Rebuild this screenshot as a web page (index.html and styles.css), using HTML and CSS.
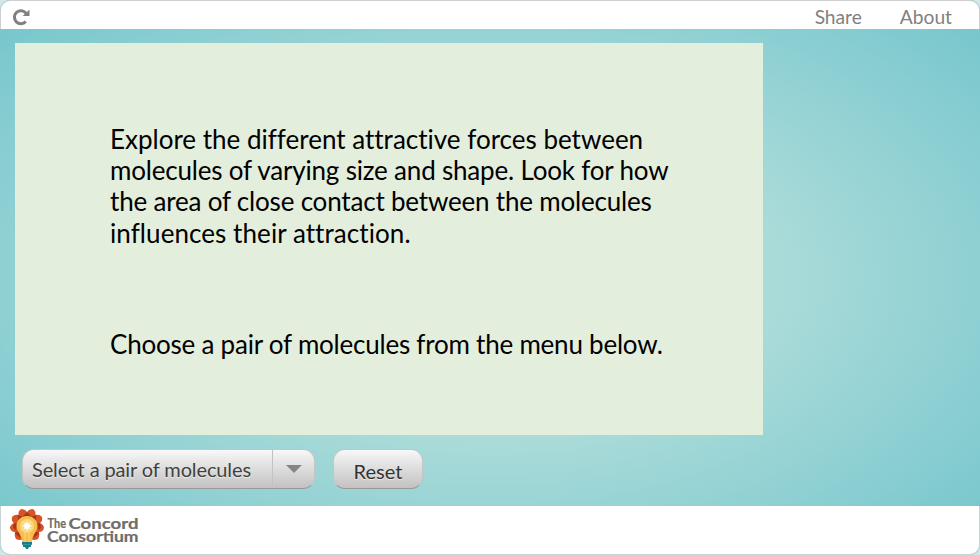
FILE: index.html
```html
<!DOCTYPE html>
<html lang="en">
<head>
<meta charset="utf-8">
<title>Molecule attraction</title>
<link rel="stylesheet" href="styles.css">
</head>
<body>
<div class="app">
  <header class="topbar">
    <svg class="reload" width="18" height="18" viewBox="0 0 18 18" aria-label="Reload">
      <path d="M14 5.200A6.500 6.500 0 1 0 13.800 13.500" fill="none" stroke="#808080" stroke-width="3"/>
      <path d="M17.500 1.500v6.500h-6.800z" fill="#808080"/>
    </svg>
    <nav class="links"><a>Share</a><a>About</a></nav>
  </header>
  <main class="stage">
    <section class="panel">
      <p><span class="wide">Explore the different attractive forces between</span><br>molecules of varying size and shape. Look for how<br>the area of close contact between the molecules<br><span class="wider">influences their attraction.</span></p>
      <p class="prompt">Choose a pair of molecules from the menu below.</p>
    </section>
    <div class="controls">
      <div class="control select"><span class="label">Select a pair of molecules</span><span class="toggle"><i class="arrow"></i></span></div>
      <button class="control reset">Reset</button>
    </div>
  </main>
  <footer class="footer">
    <svg class="logo" width="132" height="42" viewBox="0 0 132 42" aria-label="The Concord Consortium">
      <path d="M18 4Q20 1 24 1q3 2 2.500 6 4-1 6.500 2 1 4-2 6 4 2 4 5-1 4-5 4 1 4-1 7-4 2-7 0H14q-3 2-7 0-2-3-1-7-4 0-5-4 0-3 4-5-3-2-2-6 2.500-3 6.500-2Q9 3 12 1q4 0 6 3z" fill="#d75426"/>
      <path d="M18 4l4 4-4 5-4-5zM8.500 7l6 2-5 5zM27.500 7l-6 2 5 5zM5 15l6 1-5 6-2-3zM31 15l-6 1 5 6 2-3zM5.500 25l6-2v7zM30.500 25l-6-2v7z" fill="#a8361d"/>
      <path d="M18 8C11.800 8 7.500 12.400 7.500 18c0 5.500 5 8 5.800 16h9.400c.8-8 5.800-10.500 5.800-16C28.500 12.400 24.200 8 18 8z" fill="#f8bd4d"/>
      <circle cx="18" cy="18" r="7" fill="#fbd77d"/>
      <path d="M18 12.500l1 3.200 2.800-1.500-1.500 2.800 3.200 1-3.200 1 1.500 2.800-2.800-1.500-1 3.200-1-3.200-2.800 1.500 1.500-2.800-3.200-1 3.200-1-1.500-2.800 2.800 1.500z" fill="#fff"/>
      <path d="M16 24v10M20 24v10" stroke="#fbd77d"/>
      <path d="M13 34h10v3h-1v2h-2l-1 2h-2l-1-2h-2v-2h-1z" fill="#15808b"/>
      <path d="M13 36.500h10" stroke="#4ba3a7" stroke-width=".6"/>
      <g class="wordmark">
        <text class="the" x="38.500" y="19.500" textLength="18.500" lengthAdjust="spacingAndGlyphs">The</text>
        <text x="59.500" y="21.200" textLength="70" lengthAdjust="spacingAndGlyphs">Concord</text>
        <text x="38" y="33.700" textLength="91.500" lengthAdjust="spacingAndGlyphs">Consortium</text>
      </g>
    </svg>
  </footer>
</div>
</body>
</html>
```
FILE: styles.css
```css
* { box-sizing: border-box; }
body { margin: 0; background: #d4e7e8; font-family: Lato, sans-serif; font-variant-ligatures: none; }
.app {
  height: 555px;
  display: flex;
  flex-direction: column;
  overflow: hidden;
  border-radius: 10px;
  background: radial-gradient(ellipse farthest-corner at center, #d2ebdf 0%, #acdcd9 39%, #8fd0d3 70%, #72c5cb 100%);
}
.topbar {
  height: 29px;
  flex: none;
  display: flex;
  justify-content: space-between;
  padding: 7px 27px 0 11px;
  background: #fff;
  border: 1px solid #cfcfcf;
  border-bottom: 0;
  border-radius: 10px 10px 0 0;
}
.links { display: flex; gap: 38px; color: #808080; font-size: 19.200px; line-height: 18px; }
.stage { height: 477px; flex: none; padding: 14px 15px 0; }
.panel { width: 748px; height: 392px; padding: 81px 0 0 95px; background: #e4eedd; color: #000; font-size: 26px; line-height: 31.200px; letter-spacing: -.19px; }
.panel p { margin: 0; }
.panel .prompt { margin-top: 80px; letter-spacing: -.22px; }
.wide { letter-spacing: 0; }
.wider { letter-spacing: .07px; }
.controls { display: flex; gap: 18px; padding: 14px 7px 0; }
.control {
  height: 40px;
  border: 1px solid #c5c5c5;
  border-bottom-color: #999;
  border-radius: 12px;
  background: linear-gradient(#f8f8f8, #c3c1c2);
  color: #3d423d;
  font: 20px/38px Lato, sans-serif;
  font-variant-ligatures: none;
  text-shadow: 0 1px 1px #eee;
}
.select { width: 293px; display: flex; }
.label { width: 250px; padding-left: 9px; border-right: 1px solid #c2c2c2; white-space: nowrap; letter-spacing: -.12px; }
.toggle { flex: 1; display: flex; align-items: center; justify-content: center; }
.arrow { border: 8px solid transparent; border-top-color: #858585; border-bottom: 0; }
.reset { width: 90px; padding: 3px 0 0; line-height: 36px; color: #303330; }
.footer { height: 49px; flex: none; padding: 2px 8px; background: #fff; border: 1px solid #c8d5d5; border-top: 0; border-radius: 0 0 10px 10px; }
.logo { display: block; }
.wordmark { fill: #706c69; stroke: #706c69; stroke-width: .2px; font: 700 16px Lato, sans-serif; }
.wordmark .the { font-size: 13px; }
```
